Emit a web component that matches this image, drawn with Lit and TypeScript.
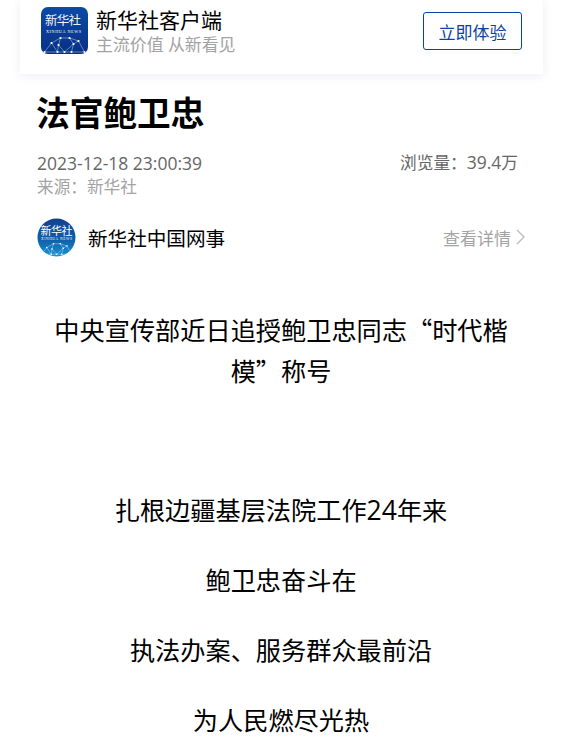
import { LitElement, html, css, svg } from "lit";
import { customElement } from "lit/decorators.js";

const net = (cx: number, y: number, s: number) => {
  const pts: [number, number][] = [
    [cx - 20 * s, y + 15 * s], [cx - 13 * s, y + 6 * s], [cx - 7 * s, y + 15 * s], [cx - 4 * s, y + 1 * s],
    [cx + 5 * s, y + 1 * s], [cx, y + 15 * s], [cx + 9 * s, y + 7 * s], [cx + 7 * s, y + 15 * s],
    [cx + 14 * s, y + 4 * s], [cx + 20 * s, y + 15 * s], [cx - 6 * s, y + 8 * s],
  ];
  const links = [[0,1],[1,2],[1,3],[3,4],[3,10],[10,2],[10,5],[4,6],[6,5],[6,7],[6,8],[4,8],[8,9],[7,9],[2,5],[5,7],[0,2]];
  return svg`${links.map(([a, b]) => svg`<line x1=${pts[a][0]} y1=${pts[a][1]} x2=${pts[b][0]} y2=${pts[b][1]} stroke="#a9c6ea" stroke-width=".55"/>`)}
  ${pts.map((p) => svg`<circle cx=${p[0]} cy=${p[1]} r=${1.1 * s} fill="#fff"/>`)}`;
};

@customElement("app-root")
export class AppRoot extends LitElement {
  static styles = css`
    :host {
      display: block;
      width: 566px;
      height: 744px;
      overflow: hidden;
      background: #fff;
      font-family: "Open Sans", "Noto Sans CJK SC", sans-serif;
      color: #000;
    }
    .banner {
      margin: 0 23px 0 20px;
      height: 74px;
      box-sizing: border-box;
      padding: 7px 21px 0 21px;
      display: flex;
      align-items: flex-start;
      background: #fff;
      box-shadow: 0 2px 10px rgba(20, 40, 90, 0.08);
    }
    .applogo { width: 47px; height: 47px; flex: none; display: block; }
    .apptext { margin: 1px 0 0 8px; flex: 1; display: flex; flex-direction: column; }
    .appname { font-size: 21px; line-height: 24px; color: #000; }
    .appslogan { margin-top: 2px; font-size: 16.9px; line-height: 22px; color: #a3a3a3; }
    .btn {
      flex: none;
      margin-top: 5px;
      width: 99px;
      height: 38px;
      box-sizing: border-box;
      border: 1px solid #0b429f;
      border-radius: 3px;
      color: #0b429f;
      font-size: 17px;
      display: flex;
      align-items: center;
      justify-content: center;
    }
    .article { padding: 0 41px 0 37px; }
    h1 { margin: 15px 0 0 -1px; font-size: 33.7px; line-height: 48px; font-weight: 700; color: #000; }
    .meta { margin-top: 13px; display: flex; justify-content: space-between; align-items: center; font-size: 17.5px; line-height: 24px; color: #666; padding-right: 7px; }
    .views { font-size: 16.67px; }
    .views b { font-weight: 400; font-size: 17.5px; }
    .source { font-size: 16.67px; line-height: 24px; color: #a3a3a3; }
    .author { margin-top: 18px; height: 40px; display: flex; align-items: center; }
    .avatar { width: 39px; height: 39px; flex: none; display: block; }
    .aname { margin-left: 12px; font-size: 19.6px; flex: 1; color: #000; }
    .more { font-size: 17px; color: #a3a3a3; display: flex; align-items: center; gap: 5px; }
    .more svg { width: 9px; height: 18px; display: block; }
    .content { margin: 0 9px 0 9px; padding-top: 52px; text-align: center; font-size: 25.2px; color: #000; font-family: "Noto Sans CJK SC", sans-serif; }
    .content p { margin: 0; line-height: 41px; }
    .num { font-family: "Open Sans", sans-serif; font-size: 26.5px; line-height: 1; }
    .gap { height: 69px; }
    .content p.l { margin-top: 29px; }
  `;

  render() {
    return html`
      <div class="banner">
        <svg class="applogo" viewBox="0 0 47 47">
          <defs>
            <clipPath id="c"><rect width="47" height="47" rx="7"/></clipPath>
            <linearGradient id="g" x1="0" y1="0" x2="0" y2="1"><stop offset="0" stop-color="#0b4aa6"/><stop offset="1" stop-color="#0a2f86"/></linearGradient>
          </defs>
          <g clip-path="url(#c)">
            <rect width="47" height="47" fill="url(#g)"/>
            <text x="22" y="18" text-anchor="middle" font-size="12.5" fill="#eef3fb" textLength="36" lengthAdjust="spacing" font-family="Noto Sans CJK SC">新华社</text>
            <text x="22.5" y="25.5" text-anchor="middle" font-size="4.2" fill="#fff" textLength="35" font-family="Liberation Serif">XINHUA NEWS</text>
            ${net(23.5, 30, 1)}
          </g>
        </svg>
        <div class="apptext">
          <div class="appname">新华社客户端</div>
          <div class="appslogan">主流价值 从新看见</div>
        </div>
        <div class="btn">立即体验</div>
      </div>
      <div class="article">
        <h1>法官鲍卫忠</h1>
        <div class="meta"><span>2023-12-18 23:00:39</span><span class="views">浏览量：<b>39.4</b>万</span></div>
        <div class="source">来源：新华社</div>
        <div class="author">
          <svg class="avatar" viewBox="0 0 39 39">
            <defs>
              <clipPath id="d"><circle cx="19.5" cy="19.5" r="19"/></clipPath>
              <linearGradient id="h" x1="0" y1="0" x2="0" y2="1"><stop offset="0" stop-color="#123f8f"/><stop offset=".55" stop-color="#0f5ea8"/><stop offset="1" stop-color="#1496d6"/></linearGradient>
            </defs>
            <g clip-path="url(#d)">
              <rect width="39" height="39" fill="url(#h)"/>
              <text x="19.5" y="17" text-anchor="middle" font-size="11" fill="#fff" textLength="32" font-family="Noto Sans CJK SC">新华社</text>
              <text x="19.5" y="22" text-anchor="middle" font-size="3.6" fill="#fff" textLength="31" font-family="Liberation Serif">XINHUA NEWS</text>
              ${net(19.5, 25, 0.75)}
            </g>
          </svg>
          <div class="aname">新华社中国网事</div>
          <div class="more">查看详情
            <svg viewBox="0 0 9 18"><path d="M1 2 L8 9 L1 16" fill="none" stroke="#bdbdbd" stroke-width="1.4"/></svg>
          </div>
        </div>
        <div class="content">
          <p>中央宣传部近日追授鲍卫忠同志“时代楷模”称号</p>
          <div class="gap"></div>
          <p class="l">扎根边疆基层法院工作<span class="num">24</span>年来</p>
          <p class="l">鲍卫忠奋斗在</p>
          <p class="l">执法办案、服务群众最前沿</p>
          <p class="l">为人民燃尽光热</p>
        </div>
      </div>
    `;
  }
}
